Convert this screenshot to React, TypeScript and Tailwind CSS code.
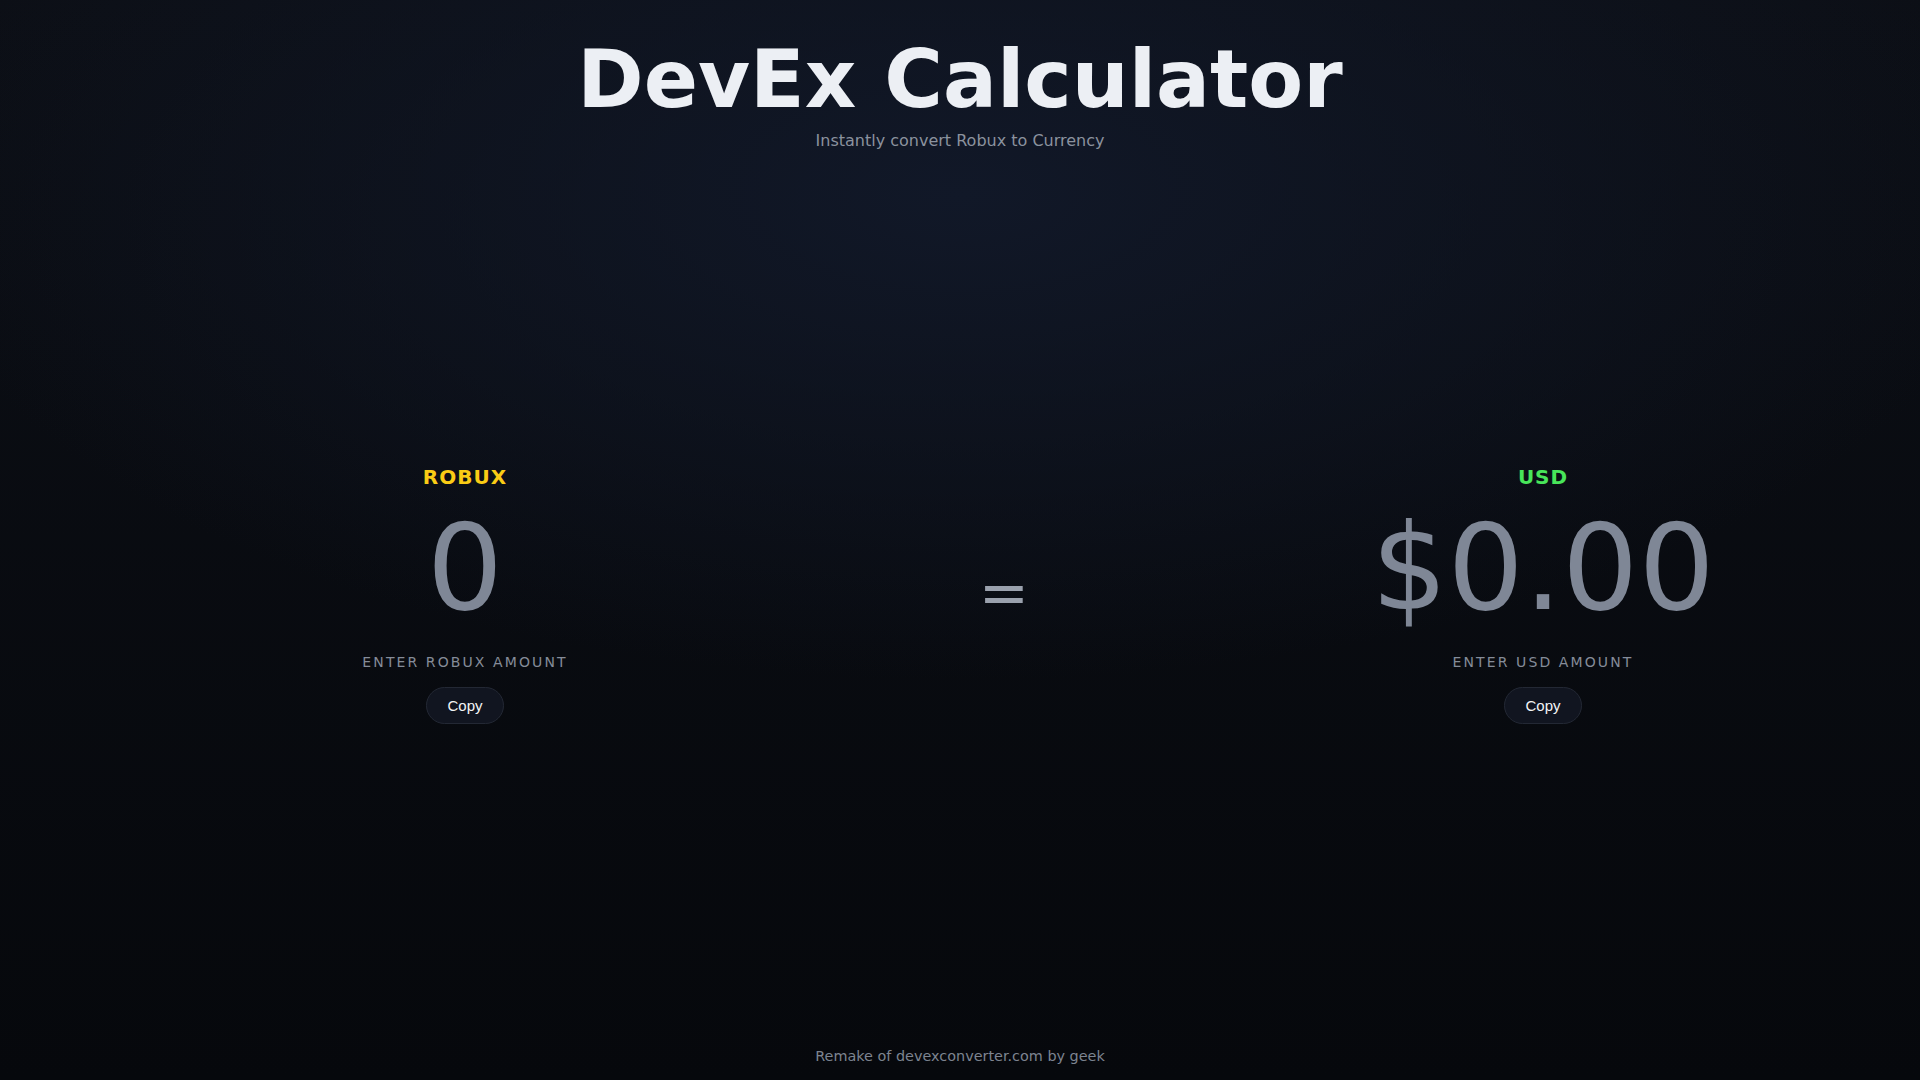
import { useState } from "react";

const RATE = 0.0035;

interface ColumnProps {
  label: string;
  labelColor: string;
  value: string;
  onChange: (v: string) => void;
  hint: string;
}

function Column({ label, labelColor, value, onChange, hint }: ColumnProps) {
  return (
    <div className="w-[539px] flex flex-col items-center">
      <div className={`text-xl leading-7 font-bold tracking-wider ${labelColor}`}>{label}</div>
      <input
        value={value}
        onChange={(e) => onChange(e.target.value)}
        className="mt-[14px] w-full h-[125px] bg-transparent text-center text-[120px] leading-none text-[#7f8796] outline-none"
      />
      <div className="mt-[22px] text-sm leading-5 tracking-[0.15em] text-[#858c99]">{hint}</div>
      <button
        onClick={() => navigator.clipboard?.writeText(value)}
        className="mt-[15px] px-5 py-2 rounded-full border border-[#232834] bg-[#111520] text-[15px] leading-[19px] text-[#f3f4f6] font-['Liberation_Sans',Arial,sans-serif] hover:bg-[#171c28]"
      >
        Copy
      </button>
    </div>
  );
}

export default function App() {
  const [robux, setRobux] = useState("0");
  const [usd, setUsd] = useState("$0.00");

  function fromRobux(v: string) {
    setRobux(v);
    const n = parseFloat(v.replace(/[^0-9.]/g, ""));
    setUsd("$" + (isNaN(n) ? 0 : n * RATE).toFixed(2));
  }

  function fromUsd(v: string) {
    setUsd(v);
    const n = parseFloat(v.replace(/[^0-9.]/g, ""));
    setRobux(String(isNaN(n) ? 0 : Math.round(n / RATE)));
  }

  return (
    <div className="min-h-screen h-screen flex flex-col font-['DejaVu_Sans',sans-serif] bg-[radial-gradient(ellipse_55%_45%_at_50%_18%,#111828_0%,rgba(17,24,40,0)_100%),linear-gradient(180deg,#0c0f16_0%,#06080c_100%)]">
      <header className="pt-[40px] flex flex-col items-center">
        <h1 className="text-[80px] leading-none font-bold text-[#eceff4]">DevEx Calculator</h1>
        <p className="mt-[9px] text-base leading-6 text-[#8b929e]">Instantly convert Robux to Currency</p>
      </header>

      <main className="flex-1 flex items-center justify-center pl-[88px] pb-[13px]">
        <Column
          label="ROBUX"
          labelColor="text-[#facc15]"
          value={robux}
          onChange={fromRobux}
          hint="ENTER ROBUX AMOUNT"
        />
        <div className="w-[539px] flex justify-center">
          <span className="pb-[2px] text-[60px] leading-none text-[#9aa1ad]">=</span>
        </div>
        <Column
          label="USD"
          labelColor="text-[#48e55a]"
          value={usd}
          onChange={fromUsd}
          hint="ENTER USD AMOUNT"
        />
      </main>

      <footer className="pb-[14px] text-center text-[14.4px] leading-5 text-[#7d8490]">
        Remake of devexconverter.com by geek
      </footer>
    </div>
  );
}
